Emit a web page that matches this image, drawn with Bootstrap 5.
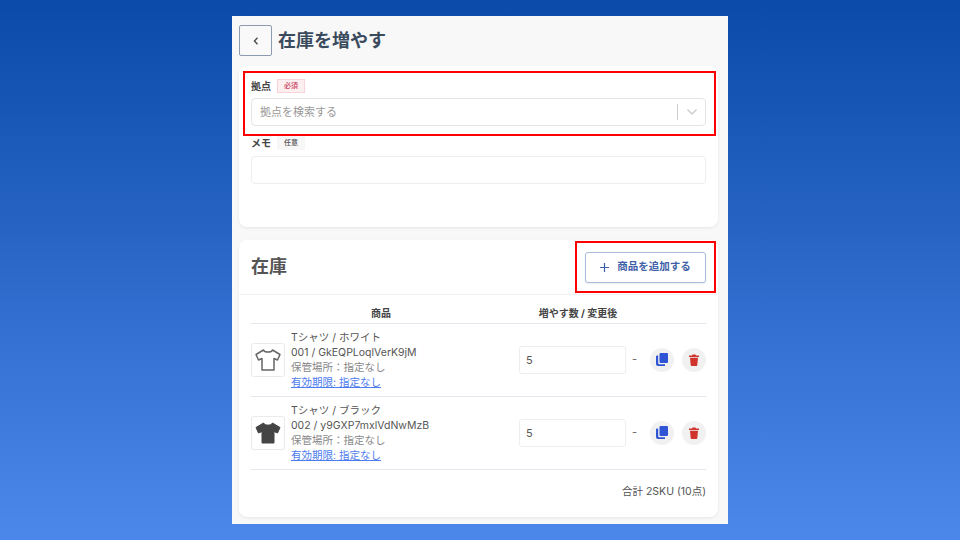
<!DOCTYPE html>
<html lang="ja">
<head>
    <meta charset="UTF-8">
    <title>在庫を増やす</title>
    <link href="https://cdn.jsdelivr.net/npm/bootstrap@5.3.0/dist/css/bootstrap.min.css" rel="stylesheet">
    <style>
        html, body { height: 100%; }
        body { font-family: Inter, "Noto Sans CJK JP", sans-serif; background: linear-gradient(180deg, #0b4aa8 0%, #4c88ea 100%); height: 540px; overflow: hidden; color: #555; }
        .stage { width: 960px; height: 540px; padding-top: 16px; }
        .phone { position: relative; width: 496px; height: 508px; margin-left: 232px; background: #f8f8f8; padding: 9px 10px 0 7px; overflow: hidden; }
        .back-btn { width: 33px; height: 31px; padding: 0; background: #f9f9f9; border: 1px solid #8c9bb0; border-radius: 2px; }
        .page-title { font-size: 18px; line-height: 31px; font-weight: 700; color: #3b4b5e; margin: 0 0 0 6px; }
        .panel-card { background: #fff; border: 0; border-radius: 8px; box-shadow: 0 1px 3px rgba(0,0,0,.08); }
        .first-card { height: 161px; margin-top: 10px; padding: 12px 12px 0; }
        .second-card { height: 277px; margin-top: 13px; }
        .field-label { font-size: 10px; line-height: 16px; font-weight: 700; color: #444; }
        .tag-req, .tag-opt { font-size: 7px; line-height: 12px; padding: 0 6px; margin-left: 6px; font-weight: 500; }
        .tag-req { color: #c9405a; background: #fdeef0; border: 1px solid #f8d3d9; }
        .tag-opt { color: #555; background: #f7f7f7; border: 1px solid #f7f7f7; }
        .select-box { height: 28px; margin-top: 4px; border: 1px solid #e3e5e8; border-radius: 4px; padding-left: 8px; font-size: 11px; color: #999; }
        .select-sep { width: 1px; height: 16px; background: #ccc; }
        .select-arrow { width: 27px; }
        .memo-row { margin-top: 9px; }
        .memo-input { height: 28px; margin-top: 5px; border: 1px solid #eceef0; border-radius: 4px; }
        .stock-head { height: 55px; padding: 0 12px; border-bottom: 1px solid #f2f3f4; }
        .stock-title { font-size: 18px; font-weight: 700; color: #555; margin: 0; }
        .add-btn { width: 121px; height: 31px; padding: 0; background: #fff; border: 1px solid #a9bcdc; border-radius: 3px; font-size: 10.5px; font-weight: 700; color: #3f5fa8; box-shadow: 0 1px 2px rgba(0,0,0,.08); }
        .stock-body { padding: 0 12px; }
        .stock-table { width: 455px; margin: 0; table-layout: fixed; font-size: 10.5px; color: #555; }
        .stock-table th { height: 28px; padding: 8px 0 0; font-size: 10px; line-height: 14px; font-weight: 700; text-align: center; color: #444; border-bottom: 1px solid #e4e8ee; }
        .stock-table td { height: 73px; padding: 0; vertical-align: middle; border-bottom: 1px solid #e4e8ee; }
        .thumb { width: 34px; height: 34px; border: 1px solid #e8eaee; border-radius: 3px; margin-right: 6px; flex: none; }
        .item-lines { line-height: 15px; font-size: 10.5px; color: #555; white-space: nowrap; }
        .item-muted { color: #888; }
        .item-link { color: #4d7cf0; text-decoration: underline; }
        .qty-box { width: 107px; height: 28px; margin-left: 8px; padding: 0 6px; line-height: 26px; font-size: 11px; color: #555; border: 1px solid #eceef0; border-radius: 3px; }
        .qty-dash { margin-left: 6px; font-size: 11px; color: #666; }
        .round-btn { width: 24px; height: 24px; padding: 0; border: 0; border-radius: 50%; background: #f1f1f2; }
        .total-line { padding-top: 14px; text-align: right; font-size: 10.5px; color: #555; }
        .red-box { position: absolute; border: 2px solid #f00; }
        .red-one { left: 11px; top: 55px; width: 473px; height: 65px; }
        .red-two { left: 343px; top: 225px; width: 141px; height: 52px; }
    </style>
</head>
<body>
    <div class="stage">
        <div class="phone">
            <div class="d-flex align-items-center">
                <button class="back-btn d-flex align-items-center justify-content-center" type="button" aria-label="戻る">
                    <svg width="10" height="10" viewBox="0 0 10 10"><path d="M6.5 1.8 3.4 5l3.1 3.2" fill="none" stroke="#444" stroke-width="1.3"/></svg>
                </button>
                <h1 class="page-title">在庫を増やす</h1>
            </div>

            <div class="panel-card first-card">
                <div class="d-flex align-items-center field-label">拠点<span class="tag-req">必須</span></div>
                <div class="select-box d-flex align-items-center">
                    <span class="flex-grow-1">拠点を検索する</span>
                    <span class="select-sep"></span>
                    <span class="select-arrow d-flex justify-content-center">
                        <svg width="12" height="8" viewBox="0 0 12 8"><path d="M1.5 1.5 6 6l4.5-4.5" fill="none" stroke="#ccc" stroke-width="1.4"/></svg>
                    </span>
                </div>
                <div class="memo-row d-flex align-items-center field-label">メモ<span class="tag-opt">任意</span></div>
                <div class="memo-input"></div>
            </div>

            <div class="panel-card second-card">
                <div class="stock-head d-flex align-items-center justify-content-between">
                    <h2 class="stock-title">在庫</h2>
                    <button class="add-btn d-flex align-items-center justify-content-center gap-2" type="button">
                        <svg width="9" height="9" viewBox="0 0 9 9"><path d="M4.5 0v9M0 4.500h9" stroke="#3f5fa8" stroke-width="1.200"/></svg>
                        商品を追加する
                    </button>
                </div>
                <div class="stock-body">
                    <table class="stock-table">
                        <colgroup>
                            <col style="width: 260px">
                            <col style="width: 134px">
                            <col style="width: 61px">
                        </colgroup>
                        <thead>
                            <tr><th>商品</th><th>増やす数 / 変更後</th><th></th></tr>
                        </thead>
                        <tbody>
                            <tr>
                                <td>
                                    <div class="d-flex align-items-center">
                                        <div class="thumb d-flex align-items-center justify-content-center">
                                            <svg width="28" height="24" viewBox="0 0 28 24"><path d="M9.500 2 2 6.500l2.500 5.500 3.500-1.500V22h12V10.500l3.500 1.500L26 6.500 18.500 2c-1 2.800-8 2.800-9 0z" fill="none" stroke="#666" stroke-width="1.500" stroke-linejoin="round"/></svg>
                                        </div>
                                        <div class="item-lines">
                                            <div>Tシャツ / ホワイト</div>
                                            <div>001 / GkEQPLoqlVerK9jM</div>
                                            <div class="item-muted">保管場所：指定なし</div>
                                            <a class="item-link" href="#">有効期限: 指定なし</a>
                                        </div>
                                    </div>
                                </td>
                                <td>
                                    <div class="d-flex align-items-center">
                                        <div class="qty-box">5</div>
                                        <span class="qty-dash">-</span>
                                    </div>
                                </td>
                                <td>
                                    <div class="d-flex justify-content-end gap-2">
                                        <button class="round-btn d-flex align-items-center justify-content-center" type="button" aria-label="複製">
                                            <svg width="12" height="13" viewBox="0 0 12 13"><path d="M4.500 0H11a1 1 0 0 1 1 1v8a1 1 0 0 1-1 1H4.500a1 1 0 0 1-1-1V1a1 1 0 0 1 1-1z" fill="#2f55d4"/><path d="M2.200 2.500V10a1.300 1.300 0 0 0 1.300 1.300H9V13H2a2 2 0 0 1-2-2V3.500a1 1 0 0 1 1-1z" fill="#2f55d4"/></svg>
                                        </button>
                                        <button class="round-btn d-flex align-items-center justify-content-center" type="button" aria-label="削除">
                                            <svg width="10" height="12" viewBox="0 0 10 12"><path d="M0 1.500h3L3.500.5h3l.5 1h3V3H0zM1 3.800h8L8.300 11a1 1 0 0 1-1 1H2.700a1 1 0 0 1-1-1z" fill="#d0342c"/></svg>
                                        </button>
                                    </div>
                                </td>
                            </tr>
                            <tr>
                                <td>
                                    <div class="d-flex align-items-center">
                                        <div class="thumb d-flex align-items-center justify-content-center">
                                            <svg width="28" height="24" viewBox="0 0 28 24"><path d="M9.500 2 2 6.500l2.500 5.500 3.500-1.500V22h12V10.500l3.500 1.500L26 6.500 18.500 2c-1 2.800-8 2.800-9 0z" fill="#444" stroke="#444" stroke-width="1" stroke-linejoin="round"/></svg>
                                        </div>
                                        <div class="item-lines">
                                            <div>Tシャツ / ブラック</div>
                                            <div>002 / y9GXP7mxlVdNwMzB</div>
                                            <div class="item-muted">保管場所：指定なし</div>
                                            <a class="item-link" href="#">有効期限: 指定なし</a>
                                        </div>
                                    </div>
                                </td>
                                <td>
                                    <div class="d-flex align-items-center">
                                        <div class="qty-box">5</div>
                                        <span class="qty-dash">-</span>
                                    </div>
                                </td>
                                <td>
                                    <div class="d-flex justify-content-end gap-2">
                                        <button class="round-btn d-flex align-items-center justify-content-center" type="button" aria-label="複製">
                                            <svg width="12" height="13" viewBox="0 0 12 13"><path d="M4.500 0H11a1 1 0 0 1 1 1v8a1 1 0 0 1-1 1H4.500a1 1 0 0 1-1-1V1a1 1 0 0 1 1-1z" fill="#2f55d4"/><path d="M2.200 2.500V10a1.300 1.300 0 0 0 1.300 1.300H9V13H2a2 2 0 0 1-2-2V3.500a1 1 0 0 1 1-1z" fill="#2f55d4"/></svg>
                                        </button>
                                        <button class="round-btn d-flex align-items-center justify-content-center" type="button" aria-label="削除">
                                            <svg width="10" height="12" viewBox="0 0 10 12"><path d="M0 1.500h3L3.500.5h3l.5 1h3V3H0zM1 3.800h8L8.300 11a1 1 0 0 1-1 1H2.700a1 1 0 0 1-1-1z" fill="#d0342c"/></svg>
                                        </button>
                                    </div>
                                </td>
                            </tr>
                        </tbody>
                    </table>
                    <div class="total-line">合計 2SKU (10点)</div>
                </div>
            </div>

            <div class="red-box red-one"></div>
            <div class="red-box red-two"></div>
        </div>
    </div>
    <script src="https://cdn.jsdelivr.net/npm/bootstrap@5.3.0/dist/js/bootstrap.bundle.min.js"></script>
</body>
</html>
